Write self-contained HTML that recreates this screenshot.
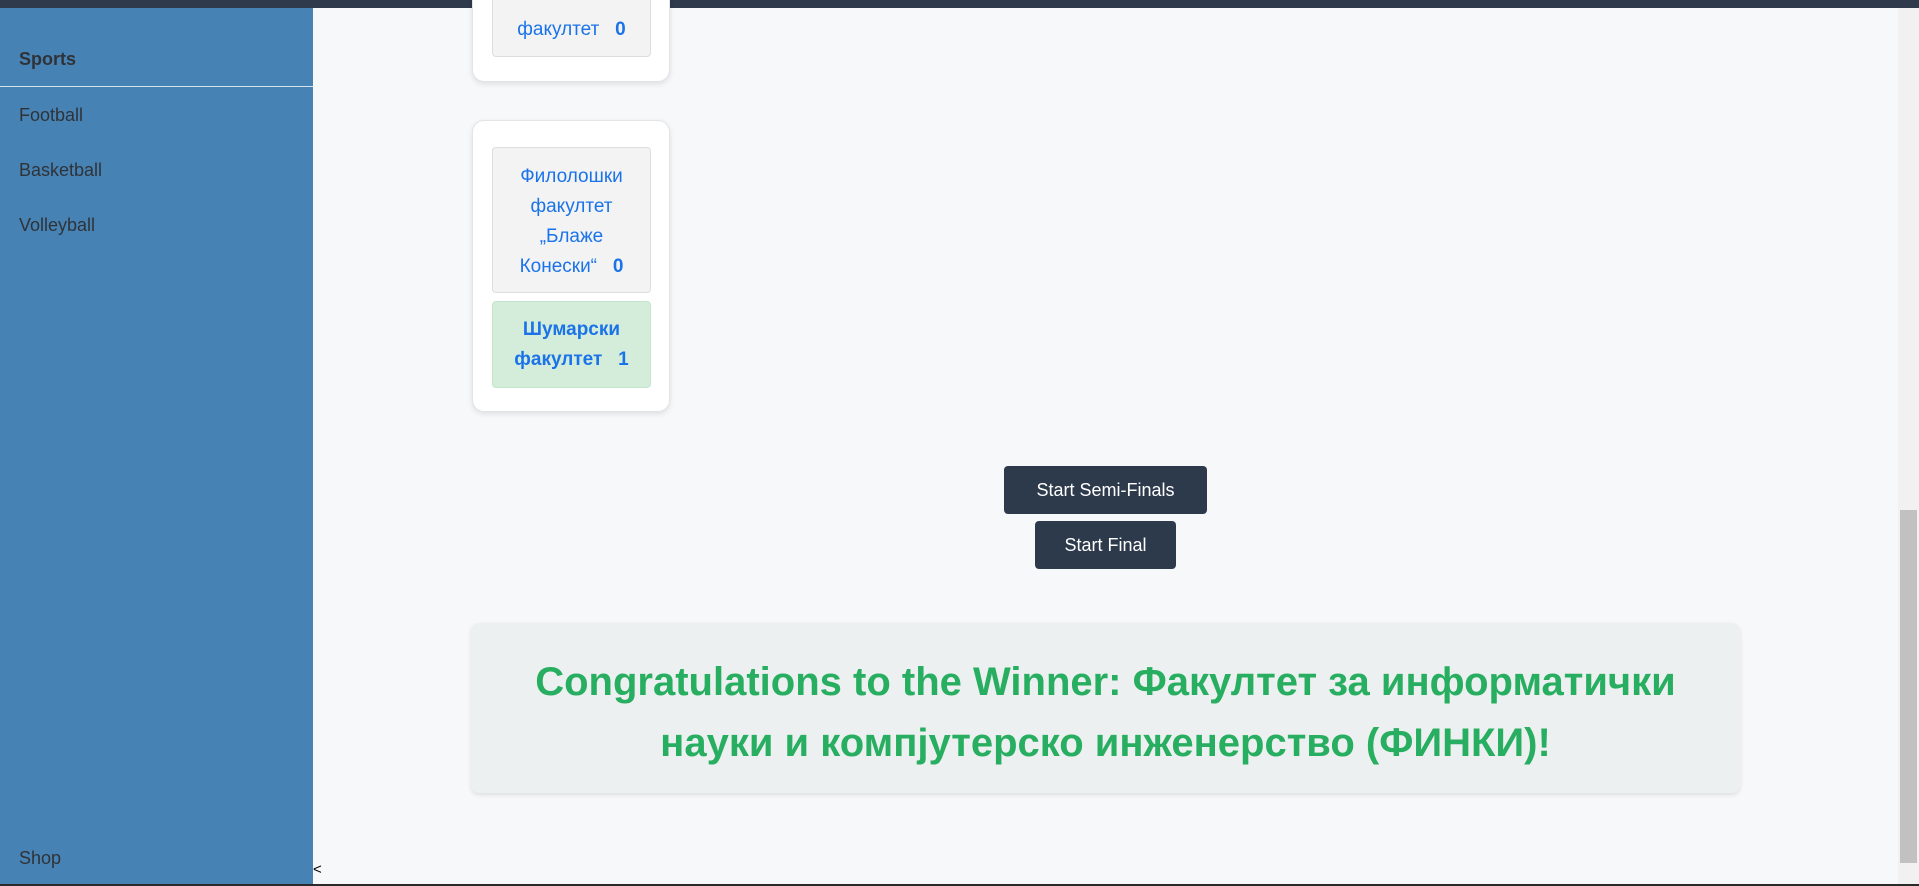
<!DOCTYPE html>
<html><head><meta charset="utf-8"><style>
*{box-sizing:border-box;margin:0;padding:0}
body{width:1919px;height:886px;overflow:hidden;background:#f7f8fa;font-family:"Liberation Sans",sans-serif;position:relative}
.top{position:absolute;left:0;top:0;width:1919px;height:8px;background:#2f3a4c}
.side{position:absolute;left:0;top:8px;width:313px;height:878px;background:#4682b4}
.side div{position:absolute;left:19px;font-size:18px;color:#2f3338}
.side .hr{position:absolute;left:0;top:78px;width:313px;height:1px;background:#d8e2ea}
.card{position:absolute;left:472px;width:198px;background:#fff;border:1px solid #e2e4e8;border-radius:12px;box-shadow:0 2px 6px rgba(0,0,0,.1)}
.box{position:absolute;left:19px;width:159px;border:1px solid #ddd;border-radius:4px;background:#f3f3f3;color:#1a73e8;font-size:19px;line-height:30px;text-align:center;padding:0 14px}
.btn{position:absolute;background:#2c3a4c;color:#fff;font-size:18px;border-radius:4px;display:flex;align-items:center;justify-content:center}
.win{position:absolute;left:471px;top:623px;width:1269px;height:170px;background:#edf0f0;border-radius:8px;box-shadow:0 2px 5px rgba(0,0,0,.1);color:#27ae60;font-weight:bold;font-size:40px;line-height:61px;text-align:center;padding-top:29px}
.sb{position:absolute;left:1898px;top:8px;width:21px;height:876px;background:#f1f1f1}
.th{position:absolute;left:1900px;top:510px;width:17px;height:353px;background:#c1c1c1}
</style></head><body>
<div class="top"></div>
<div class="side">
<div style="top:41px;font-weight:bold">Sports</div>
<div class="hr" style="left:0"></div>
<div style="top:97px">Football</div>
<div style="top:152px">Basketball</div>
<div style="top:207px">Volleyball</div>
<div style="top:840px">Shop</div>
</div>
<div style="position:absolute;left:313px;top:861px;font-size:15px">&lt;</div>
<div class="card" style="top:-20px;height:102px">
<div class="box" style="top:0;height:76px;padding-top:33px">факултет&nbsp;&nbsp;&nbsp;<b>0</b></div>
</div>
<div class="card" style="top:120px;height:292px">
<div class="box" style="top:26px;height:146px;padding-top:14px">Филолошки факултет „Блаже Конески“&nbsp;&nbsp;&nbsp;<b>0</b></div>
<div class="box" style="top:180px;height:87px;padding-top:13px;background:#d4edda;border-color:#c3e6cb;font-weight:bold">Шумарски факултет&nbsp;&nbsp;&nbsp;1</div>
</div>
<div class="btn" style="left:1004px;top:466px;width:203px;height:48px">Start Semi-Finals</div>
<div class="btn" style="left:1035px;top:521px;width:141px;height:48px">Start Final</div>
<div class="win">Congratulations to the Winner: Факултет за информатички<br>науки и компјутерско инженерство (ФИНКИ)!</div>
<div class="sb"></div><div class="th"></div>
<div style="position:absolute;left:0;top:884px;width:1919px;height:2px;background:#2a2a2a"></div>
</body></html>
